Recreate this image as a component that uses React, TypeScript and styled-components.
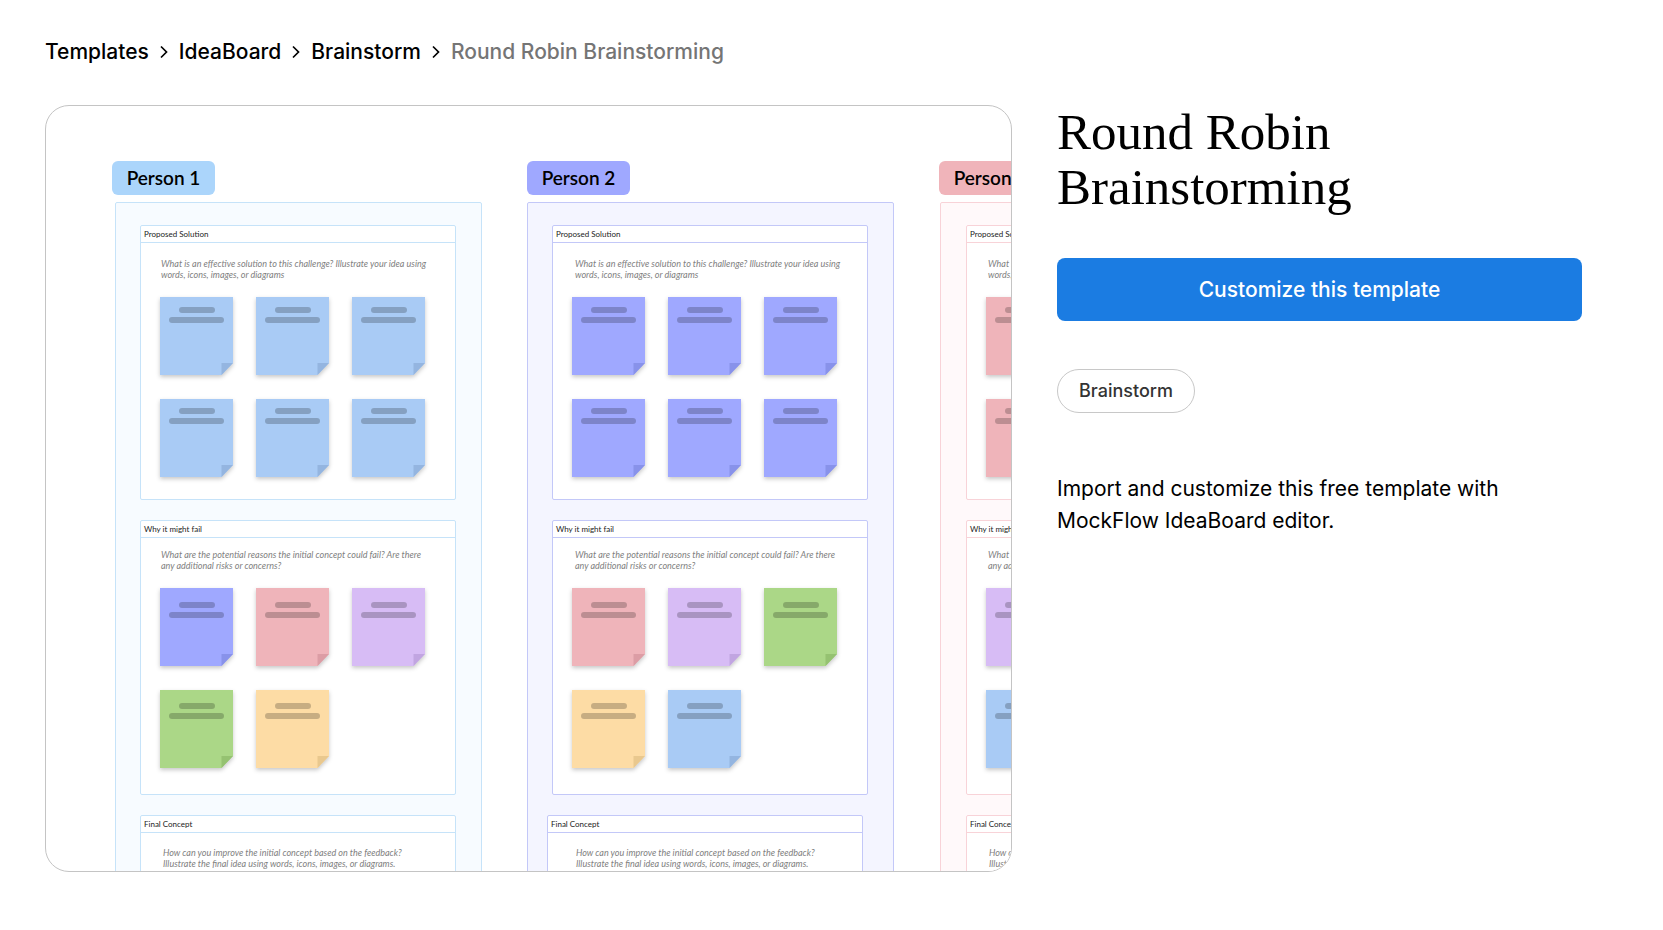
import React from "react";
import styled, { createGlobalStyle } from "styled-components";

const GlobalStyle = createGlobalStyle`
  *, *::before, *::after { box-sizing: border-box; }
  body {
    margin: 0;
    background: #fff;
    color: #000;
    font-family: Inter, "Liberation Sans", sans-serif;
  }
`;

const Page = styled.div`
  padding: 36px 81px 58px 45px;
`;

const Crumbs = styled.ol`
  display: flex;
  flex-wrap: wrap;
  align-items: center;
  gap: 9px;
  margin: 0 0 37px;
  padding: 0;
  list-style: none;
  font-size: 21px;
  font-weight: 500;
  line-height: 32px;
`;

const Crumb = styled.li`
  display: flex;
  align-items: center;
  gap: 9px;
  color: #757575;
`;

const CrumbLink = styled.a`
  color: #000;
  text-decoration: none;
`;

const Chevron = styled.svg`
  width: 12px;
  height: 14px;
  fill: none;
  stroke: #000;
  stroke-width: 1.7;
`;

const Content = styled.main`
  display: grid;
  grid-template-columns: minmax(0, 967fr) minmax(0, 525fr);
  gap: 45px;
  align-items: start;
`;

const Preview = styled.section`
  aspect-ratio: 967 / 767;
  overflow: hidden;
  border: 1px solid #c4c4c4;
  border-radius: 24px;
`;

const Board = styled.div`
  display: grid;
  grid-template-columns: repeat(3, max-content);
  gap: 45px;
  padding: 55px 66px;
  font-family: Lato, "Open Sans", sans-serif;
`;

const Badge = styled.h2<{ $color: string }>`
  width: 103px;
  margin: 0 0 7px;
  border-radius: 6px;
  background: ${(p) => p.$color};
  font-size: 19px;
  font-weight: 600;
  line-height: 34px;
  text-align: center;
`;

const Lane = styled.div<{ $fill: string; $line: string; $inset: number; $gutter: number }>`
  display: flex;
  flex-direction: column;
  gap: 20px;
  width: 367px;
  margin-left: ${(p) => p.$inset}px;
  padding: 22px ${(p) => p.$gutter}px;
  border: 1px solid ${(p) => p.$line};
  border-radius: 2px;
  background: ${(p) => p.$fill};
`;

const Card = styled.article<{ $line: string; $outdent: number }>`
  width: 316px;
  height: 275px;
  margin-left: -${(p) => p.$outdent}px;
  border: 1px solid ${(p) => p.$line};
  border-radius: 2px;
  background: #fff;
`;

const CardTitle = styled.h3<{ $line: string }>`
  margin: 0;
  padding-left: 3px;
  border-bottom: 1px solid ${(p) => p.$line};
  color: #222;
  font-size: 8px;
  font-weight: 400;
  line-height: 16px;
`;

const Prompt = styled.p<{ $top: number; $left: number }>`
  margin: 0;
  padding: ${(p) => p.$top}px 0 0 ${(p) => p.$left}px;
  color: #808080;
  font-size: 9px;
  font-style: italic;
  line-height: 11px;
  white-space: nowrap;
`;

const Notes = styled.div<{ $top: number }>`
  display: grid;
  grid-template-columns: repeat(3, 73px);
  gap: 24px 23px;
  padding: ${(p) => p.$top}px 0 0 19px;
`;

const NoteShape = styled.svg`
  display: block;
  width: 73px;
  height: 78px;
  overflow: visible;
  filter: drop-shadow(0 2px 2px rgba(0, 0, 0, 0.22));
`;

const Details = styled.aside`
  display: flex;
  flex-direction: column;
  align-items: flex-start;
`;

const Title = styled.h1`
  margin: 0 0 43px;
  font-family: "Liberation Serif", "Times New Roman", serif;
  font-size: 51px;
  font-weight: 400;
  line-height: 55px;
`;

const CustomizeButton = styled.button`
  width: 100%;
  margin-bottom: 48px;
  padding: 0 24px;
  border: 0;
  border-radius: 8px;
  background: #1b7ce2;
  color: #fff;
  font-family: inherit;
  font-size: 21px;
  font-weight: 500;
  line-height: 63px;
  cursor: pointer;
`;

const Tag = styled.a`
  margin-bottom: 60px;
  padding: 0 21px;
  border: 1px solid #c8c8c8;
  border-radius: 22px;
  color: #333;
  font-size: 18px;
  font-weight: 500;
  line-height: 42px;
  text-decoration: none;
`;

const Summary = styled.p`
  margin: 0;
  font-size: 21px;
  line-height: 32px;
`;

const paper = {
  blue: ["#a9cbf5", "#94b5e0"],
  indigo: ["#9fa8ff", "#8892ea"],
  pink: ["#efb4ba", "#dc9da5"],
  lilac: ["#d7bcf5", "#c1a5e1"],
  green: ["#abd787", "#95c271"],
  yellow: ["#fddca5", "#e9c88e"],
};
type Paper = keyof typeof paper;

const lanes: {
  name: string;
  badge: string;
  fill: string;
  line: string;
  inset: number;
  gutter: number;
  promptLeft: number;
  finalOutdent: number;
  finalPromptLeft: number;
  solution: Paper;
  risks: Paper[];
}[] = [
  {
    name: "Person 1", badge: "#abd5fb", fill: "#f7fbff", line: "#c6e3f9",
    inset: 3, gutter: 24, promptLeft: 20, finalOutdent: 0, finalPromptLeft: 22,
    solution: "blue", risks: ["indigo", "pink", "lilac", "green", "yellow"],
  },
  {
    name: "Person 2", badge: "#9fa8ff", fill: "#f4f5ff", line: "#c3c8f8",
    inset: 0, gutter: 24, promptLeft: 22, finalOutdent: 5, finalPromptLeft: 28,
    solution: "indigo", risks: ["pink", "lilac", "green", "yellow", "blue"],
  },
  {
    name: "Person 3", badge: "#f0b4ba", fill: "#fff9fa", line: "#f8d3d8",
    inset: 1, gutter: 25, promptLeft: 21, finalOutdent: 0, finalPromptLeft: 22,
    solution: "pink", risks: ["lilac", "green", "yellow", "blue", "indigo"],
  },
];

function Note({ color, inkTop }: { color: Paper; inkTop: number }) {
  const [face, fold] = paper[color];
  return (
    <NoteShape viewBox="0 0 73 78" aria-hidden="true">
      <path d="M0 0H73V66L61.5 78H0Z" fill={face} />
      <path d="M61.5 66H73L61.5 78Z" fill={fold} />
      <rect x="19" y={inkTop} width="36" height="6" rx="3" fill="#000" fillOpacity="0.21" />
      <rect x="9" y={inkTop + 10} width="55" height="6" rx="3" fill="#000" fillOpacity="0.21" />
    </NoteShape>
  );
}

function NoteGrid({ colors, top, ink }: { colors: Paper[]; top: number; ink: [number, number] }) {
  return (
    <Notes $top={top}>
      {colors.map((color, i) => (
        <Note key={i} color={color} inkTop={i < 3 ? ink[0] : ink[1]} />
      ))}
    </Notes>
  );
}

const trail = ["Templates", "IdeaBoard", "Brainstorm"];

export default function App() {
  return (
    <>
      <GlobalStyle />
      <Page>
        <nav aria-label="Breadcrumb">
          <Crumbs>
            {trail.map((name) => (
              <Crumb key={name}>
                <CrumbLink href="#">{name}</CrumbLink>
                <Chevron viewBox="0 0 12 14" aria-hidden="true">
                  <path d="M3 1.5L8.5 7L3 12.5" />
                </Chevron>
              </Crumb>
            ))}
            <Crumb aria-current="page">Round Robin Brainstorming</Crumb>
          </Crumbs>
        </nav>
        <Content>
          <Preview aria-label="Template preview">
            <Board>
              {lanes.map((lane) => (
                <section key={lane.name}>
                  <Badge $color={lane.badge}>{lane.name}</Badge>
                  <Lane $fill={lane.fill} $line={lane.line} $inset={lane.inset} $gutter={lane.gutter}>
                    <Card $line={lane.line} $outdent={0}>
                      <CardTitle $line={lane.line}>Proposed Solution</CardTitle>
                      <Prompt $top={15} $left={lane.promptLeft}>
                        What is an effective solution to this challenge? Illustrate your idea using
                        <br />
                        words, icons, images, or diagrams
                      </Prompt>
                      <NoteGrid colors={Array(6).fill(lane.solution)} top={17} ink={[10, 9]} />
                    </Card>
                    <Card $line={lane.line} $outdent={0}>
                      <CardTitle $line={lane.line}>Why it might fail</CardTitle>
                      <Prompt $top={11} $left={lane.promptLeft}>
                        What are the potential reasons the initial concept could fail? Are there
                        <br />
                        any additional risks or concerns?
                      </Prompt>
                      <NoteGrid colors={lane.risks} top={17} ink={[14, 13]} />
                    </Card>
                    <Card $line={lane.line} $outdent={lane.finalOutdent}>
                      <CardTitle $line={lane.line}>Final Concept</CardTitle>
                      <Prompt $top={14} $left={lane.finalPromptLeft}>
                        How can you improve the initial concept based on the feedback?
                        <br />
                        Illustrate the final idea using words, icons, images, or diagrams.
                      </Prompt>
                    </Card>
                  </Lane>
                </section>
              ))}
            </Board>
          </Preview>
          <Details>
            <Title>Round Robin Brainstorming</Title>
            <CustomizeButton type="button">Customize this template</CustomizeButton>
            <Tag href="#">Brainstorm</Tag>
            <Summary>Import and customize this free template with MockFlow IdeaBoard editor.</Summary>
          </Details>
        </Content>
      </Page>
    </>
  );
}
